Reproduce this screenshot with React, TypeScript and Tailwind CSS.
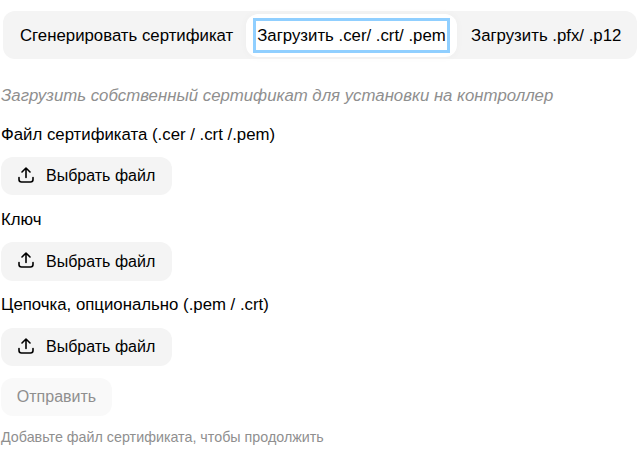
function FileButton() {
  return (
    <button className="flex h-[38.4px] w-[171px] items-center gap-[12px] rounded-xl bg-[#f4f4f4] pl-[17px] text-[16px] text-black">
      <svg viewBox="0 0 16 16" className="mb-[3px] h-[16px] w-[16px]" fill="none" stroke="currentColor" strokeWidth={1.6} strokeLinecap="round" strokeLinejoin="round">
        <path d="M8 10.5V1M4 5L8 1L12 5" />
        <path d="M1 10.5V12.5C1 13.9 2.1 15 3.5 15H12.5C13.9 15 15 13.9 15 12.5V10.5" />
      </svg>
      Выбрать файл
    </button>
  );
}

export default function App() {
  return (
    <div className="h-[451px] w-[644px] overflow-hidden bg-white text-black font-['Liberation_Sans',Arial,sans-serif]">
      <div className="pl-[1px] pr-[7px] pt-[11px]">
        {/* Tabs */}
        <div className="ml-[2px] flex h-[48px] items-center rounded-xl bg-[#f4f4f4] text-[16.8px]">
          <div className="w-[243px] pl-[17px] pt-[2px]">Сгенерировать сертификат</div>
          <div className="flex h-[43px] w-[211px] items-center justify-center rounded-xl bg-white shadow-[0_0_8px_rgba(0,0,0,0.03)]">
            <span className="flex h-[35px] w-[197px] items-center justify-center whitespace-nowrap border-[3px] border-[#90cfff] pt-[2px]">
              Загрузить .cer/ .crt/ .pem
            </span>
          </div>
          <div className="pl-[14px] pt-[2px]">Загрузить .pfx/ .p12</div>
        </div>

        {/* Upload form */}
        <p className="mt-[27px] text-[16.8px] leading-[20px] italic text-[#8f8f8f]">
          Загрузить собственный сертификат для установки на контроллер
        </p>
        <div className="mt-[20px] text-[16.8px] leading-[18px]">Файл сертификата (.cer / .crt /.pem)</div>
        <div className="mt-[13px]"><FileButton /></div>
        <div className="mt-[15.6px] text-[16.8px] leading-[18px]">Ключ</div>
        <div className="mt-[13.5px]"><FileButton /></div>
        <div className="mt-[15.1px] text-[16.8px] leading-[18px]">Цепочка, опционально (.pem / .crt)</div>
        <div className="mt-[14px]"><FileButton /></div>
        <button className="mt-[11.4px] h-[38px] w-[111px] rounded-xl bg-[#f9f9f9] text-[16px] text-[#8f8f8f]">
          Отправить
        </button>
        <p className="mt-[13px] text-[14.3px] leading-[16px] text-[#8f8f8f]">
          Добавьте файл сертификата, чтобы продолжить
        </p>
      </div>
    </div>
  );
}
